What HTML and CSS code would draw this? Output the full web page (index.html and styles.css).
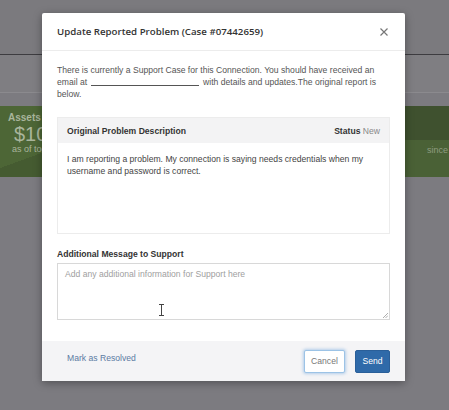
FILE: index.html
```html
<!DOCTYPE html>
<html>
<head>
<meta charset="utf-8">
<link rel="stylesheet" href="styles.css">
</head>
<body>
<div class="page">
  <div class="bg-top"></div>
  <div class="bg-nav"></div>
  <div class="bg-gap"></div>
  <div class="bg-green">
    <div class="assets">
      <div class="assets-label">Assets</div>
      <div class="assets-value">$10</div>
      <div class="assets-sub">as of today</div>
    </div>
    <div class="since">since</div>
  </div>
  <div class="bg-rest"></div>

  <div class="modal">
    <div class="modal-header">
      <h2 class="modal-title">Update Reported Problem (Case #07442659)</h2>
      <svg class="close" width="10" height="10" viewBox="0 0 10 10"><path d="M1.5 1.5 L8.5 8.5 M8.5 1.5 L1.5 8.5" stroke="#777" stroke-width="1.2" fill="none"/></svg>
    </div>
    <div class="modal-body">
      <p class="intro">There is currently a Support Case for this Connection. You should have received an email at<span class="redacted"></span>with details and updates.The original report is below.</p>
      <div class="orig">
        <div class="orig-head">
          <span class="orig-title">Original Problem Description</span>
          <span class="status"><b>Status</b> New</span>
        </div>
        <div class="orig-body">I am reporting a problem. My connection is saying needs credentials when my username and password is correct.</div>
      </div>
      <div class="label">Additional Message to Support</div>
      <div class="textarea-wrap">
        <div class="textarea">Add any additional information for Support here</div>
        <svg class="grip" width="6" height="6" viewBox="0 0 6 6"><path d="M6 1 L1 6 M6 3.5 L3.5 6" stroke="#999" stroke-width="0.8"/></svg>
      </div>
    </div>
    <div class="modal-footer">
      <a class="resolve">Mark as Resolved</a>
      <div class="buttons">
        <button class="btn cancel">Cancel</button>
        <button class="btn send">Send</button>
      </div>
    </div>
  </div>
  <svg class="ibeam" width="7" height="12" viewBox="0 0 7 12"><path d="M1 0.5 H6 M1 11.5 H6 M3.5 0.5 V11.5" stroke="#444" stroke-width="1" fill="none"/></svg>
</div>
</body>
</html>
```
FILE: styles.css
```css
* { box-sizing: border-box; }
html, body { margin: 0; padding: 0; }
body {
  width: 449px;
  height: 410px;
  overflow: hidden;
  background: #7c7b80;
  font-family: "Liberation Sans", Arial, sans-serif;
}
.page {
  position: relative;
  width: 449px;
  height: 410px;
  display: flex;
  flex-direction: column;
}
.bg-top {
  height: 55px;
  background: #7b7a7e;
  border-bottom: 1px solid #3d3c40;
}
.bg-nav {
  height: 38px;
  background: #7f7e82;
  border-bottom: 1px solid #8b8a8e;
}
.bg-gap {
  height: 13px;
  background: #7c7b80;
}
.bg-green {
  height: 71px;
  display: flex;
  justify-content: space-between;
  background:
    linear-gradient(to bottom, #3f512f 0, #3f512f 34px, #4a6136 34px, #4a6136 100%);
}
.assets {
  width: 80px;
  padding: 6px 0 0 8px;
  color: #a9b59c;
  background: linear-gradient(160deg, #4d6636 0, #4d6636 62%, #455b31 62%, #455b31 100%);
}
.assets-label { font-size: 10px; font-weight: bold; line-height: 12px; }
.assets-value { font-size: 20px; line-height: 20px; padding-left: 6px; }
.assets-sub { font-size: 9px; line-height: 10px; padding-left: 4px; }
.since {
  align-self: flex-end;
  padding: 0 0 22px 0;
  margin-right: -2px;
  font-size: 9px;
  color: #8e9c80;
  width: 24px;
}
.bg-rest { flex: 1; background: #7c7b80; }

.modal {
  position: absolute;
  left: 42px;
  top: 13px;
  width: 363px;
  height: 368px;
  background: #fff;
  border-radius: 2px;
  box-shadow: 0 2px 8px rgba(0,0,0,0.35);
  display: flex;
  flex-direction: column;
}
.modal-header {
  height: 38px;
  border-bottom: 1px solid #ececec;
  display: flex;
  align-items: center;
  justify-content: space-between;
  padding: 0 16px 0 15px;
}
.modal-title {
  margin: 0;
  font-family: "Open Sans", sans-serif;
  font-weight: 600;
  font-size: 9.7px;
  color: #333;
}
.close { display: block; }
.modal-body {
  flex: 1;
  padding: 13px 15px 0 15px;
}
.intro {
  margin: 0;
  font-size: 8.6px;
  line-height: 12px;
  color: #555;
}
.redacted {
  display: inline-block;
  width: 108px;
  height: 1px;
  background: #555;
  vertical-align: -1px;
  margin: 0 4px;
}
.orig {
  margin-top: 17px;
  border: 1px solid #ececec;
  height: 117px;
}
.orig-head {
  height: 25px;
  background: #f3f3f4;
  display: flex;
  align-items: center;
  justify-content: space-between;
  padding: 0 9px 0 9px;
  font-size: 8.6px;
  color: #333;
}
.orig-title { font-weight: bold; }
.status { color: #888; }
.status b { color: #333; }
.orig-body {
  padding: 10px 9px;
  font-size: 8.6px;
  line-height: 12px;
  color: #444;
}
.label {
  margin-top: 14px;
  font-size: 8.6px;
  font-weight: bold;
  color: #333;
  line-height: 12px;
}
.textarea-wrap {
  position: relative;
  margin-top: 3px;
}
.textarea {
  height: 57px;
  border: 1px solid #d8d8d8;
  padding: 4px 7px;
  font-size: 8.6px;
  line-height: 12px;
  color: #a0a0a0;
}
.grip { position: absolute; right: 2px; bottom: 2px; }
.modal-footer {
  height: 40px;
  background: #f4f4f6;
  display: flex;
  align-items: center;
  justify-content: space-between;
  padding: 0 15px 0 25px;
}
.resolve {
  font-size: 8.6px;
  color: #5b7ba3;
  margin-top: -7px;
}
.buttons { display: flex; gap: 10px; }
.btn {
  height: 23px;
  font-family: "Liberation Sans", Arial, sans-serif;
  font-size: 8.6px;
  border-radius: 2px;
  padding: 0;
  cursor: pointer;
}
.cancel {
  width: 41px;
  background: #fff;
  color: #777;
  border: 1px solid #9cc3e6;
  box-shadow: 0 0 3px 1px rgba(102,160,220,0.45);
}
.send {
  width: 35px;
  background: #2f6aa9;
  color: #fff;
  border: 1px solid #2a5f99;
}
.ibeam {
  position: absolute;
  left: 158px;
  top: 304px;
}
```
